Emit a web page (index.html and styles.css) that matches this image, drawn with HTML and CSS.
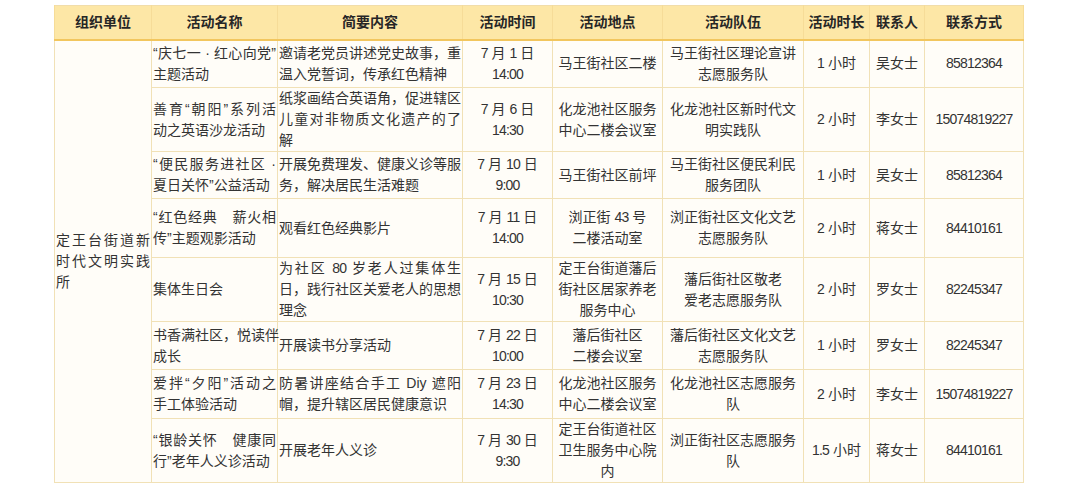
FILE: index.html
```html
<!DOCTYPE html>
<html lang="zh-CN">
<head>
<meta charset="utf-8">
<title>活动表</title>
<link rel="stylesheet" href="styles.css">
</head>
<body>
<div class="page">
<table class="tbl">
  <colgroup>
    <col class="c1"><col class="c2"><col class="c3"><col class="c4"><col class="c5"><col class="c6"><col class="c7"><col class="c8"><col class="c9">
  </colgroup>
  <thead>
    <tr class="hd">
      <th>组织单位</th><th>活动名称</th><th>简要内容</th><th>活动时间</th><th>活动地点</th><th>活动队伍</th><th>活动时长</th><th>联系人</th><th>联系方式</th>
    </tr>
  </thead>
  <tbody>
    <tr class="r1">
      <td class="lt org" rowspan="8"><span class="l">定王台街道新</span><span class="l">时代文明实践</span><span class="l">所</span></td>
      <td class="lt"><span class="l">“庆七一 · 红心向党”</span><span class="l">主题活动</span></td>
      <td class="lt"><span class="l">邀请老党员讲述党史故事，重</span><span class="l">温入党誓词，传承红色精神</span></td>
      <td><span class="n">7</span> 月 <span class="n">1</span> 日<br><span class="n">14:00</span></td>
      <td>马王街社区二楼</td>
      <td>马王街社区理论宣讲<br>志愿服务队</td>
      <td><span class="n">1</span> 小时</td>
      <td>吴女士</td>
      <td class="n">85812364</td>
    </tr>
    <tr class="r2">
      <td class="lt"><span class="l">善育“朝阳”系列活</span><span class="l">动之英语沙龙活动</span></td>
      <td class="lt"><span class="l">纸浆画结合英语角，促进辖区</span><span class="l">儿童对非物质文化遗产的了</span><span class="l">解</span></td>
      <td><span class="n">7</span> 月 <span class="n">6</span> 日<br><span class="n">14:30</span></td>
      <td>化龙池社区服务<br>中心二楼会议室</td>
      <td>化龙池社区新时代文<br>明实践队</td>
      <td><span class="n">2</span> 小时</td>
      <td>李女士</td>
      <td class="n">15074819227</td>
    </tr>
    <tr class="r3">
      <td class="lt"><span class="l">“便民服务进社区 ·</span><span class="l">夏日关怀”公益活动</span></td>
      <td class="lt"><span class="l">开展免费理发、健康义诊等服</span><span class="l">务，解决居民生活难题</span></td>
      <td><span class="n">7</span> 月 <span class="n">10</span> 日<br><span class="n">9:00</span></td>
      <td>马王街社区前坪</td>
      <td>马王街社区便民利民<br>服务团队</td>
      <td><span class="n">1</span> 小时</td>
      <td>吴女士</td>
      <td class="n">85812364</td>
    </tr>
    <tr class="r4">
      <td class="lt"><span class="l">“红色经典　薪火相</span><span class="l">传”主题观影活动</span></td>
      <td class="lt"><span class="l">观看红色经典影片</span></td>
      <td><span class="n">7</span> 月 <span class="n">11</span> 日<br><span class="n">14:00</span></td>
      <td>浏正街 <span class="n">43</span> 号<br>二楼活动室</td>
      <td>浏正街社区文化文艺<br>志愿服务队</td>
      <td><span class="n">2</span> 小时</td>
      <td>蒋女士</td>
      <td class="n">84410161</td>
    </tr>
    <tr class="r5">
      <td class="lt"><span class="l">集体生日会</span></td>
      <td class="lt"><span class="l">为社区 <span class="n">80</span> 岁老人过集体生</span><span class="l">日，践行社区关爱老人的思想</span><span class="l">理念</span></td>
      <td><span class="n">7</span> 月 <span class="n">15</span> 日<br><span class="n">10:30</span></td>
      <td>定王台街道藩后<br>街社区居家养老<br>服务中心</td>
      <td>藩后街社区敬老<br>爱老志愿服务队</td>
      <td><span class="n">2</span> 小时</td>
      <td>罗女士</td>
      <td class="n">82245347</td>
    </tr>
    <tr class="r6">
      <td class="lt"><span class="l">书香满社区，悦读伴</span><span class="l">成长</span></td>
      <td class="lt"><span class="l">开展读书分享活动</span></td>
      <td><span class="n">7</span> 月 <span class="n">22</span> 日<br><span class="n">10:00</span></td>
      <td>藩后街社区<br>二楼会议室</td>
      <td>藩后街社区文化文艺<br>志愿服务队</td>
      <td><span class="n">1</span> 小时</td>
      <td>罗女士</td>
      <td class="n">82245347</td>
    </tr>
    <tr class="r7">
      <td class="lt"><span class="l">爱拌“夕阳”活动之</span><span class="l">手工体验活动</span></td>
      <td class="lt"><span class="l">防暑讲座结合手工 Diy 遮阳</span><span class="l">帽，提升辖区居民健康意识</span></td>
      <td><span class="n">7</span> 月 <span class="n">23</span> 日<br><span class="n">14:30</span></td>
      <td>化龙池社区服务<br>中心二楼会议室</td>
      <td>化龙池社区志愿服务<br>队</td>
      <td><span class="n">2</span> 小时</td>
      <td>李女士</td>
      <td class="n">15074819227</td>
    </tr>
    <tr class="r8">
      <td class="lt"><span class="l">“银龄关怀　健康同</span><span class="l">行”老年人义诊活动</span></td>
      <td class="lt"><span class="l">开展老年人义诊</span></td>
      <td><span class="n">7</span> 月 <span class="n">30</span> 日<br><span class="n">9:30</span></td>
      <td>定王台街道社区<br>卫生服务中心院<br>内</td>
      <td>浏正街社区志愿服务<br>队</td>
      <td><span class="n">1.5</span> 小时</td>
      <td>蒋女士</td>
      <td class="n">84410161</td>
    </tr>
  </tbody>
</table>
</div>
</body>
</html>
```

FILE: styles.css
```css
html, body {
  margin: 0;
  padding: 0;
  background: #ffffff;
}

.page {
  padding: 5px 0 0 54px;
}

.tbl {
  width: 969px;
  table-layout: fixed;
  border-collapse: collapse;
  font-family: "Liberation Sans", "Noto Sans CJK SC", sans-serif;
  font-size: 14px;
  line-height: 21px;
  color: #333333;
  border: 1px solid #f1ddaa;
}

.c1 { width: 97px; }
.c2 { width: 126px; }
.c3 { width: 185px; }
.c4 { width: 90px; }
.c5 { width: 110px; }
.c6 { width: 141px; }
.c7 { width: 66px; }
.c8 { width: 55px; }
.c9 { width: 99px; }

.hd {
  height: 34px;
  background: #fde7a6;
}

.hd th {
  font-weight: bold;
  color: #262626;
  text-align: center;
  vertical-align: middle;
  padding: 0;
  border-left: 1px solid #f6dc98;
  border-right: 1px solid #f6dc98;
  border-bottom: 2px solid #f2c65e;
  white-space: nowrap;
}

.tbl td {
  padding: 0 1px;
  border: 1px solid #f1e1b6;
  text-align: center;
  vertical-align: middle;
  background: #fffdf8;
  white-space: nowrap;
}

.tbl td.lt {
  text-align: left;
}

.l {
  display: block;
  text-align: justify;
  text-align-last: justify;
}

.l:last-child {
  text-align-last: auto;
}

.org {
  padding: 0;
}

.n {
  letter-spacing: -0.8px;
}

.r1 { height: 48px; }
.r2 { height: 63px; }
.r3 { height: 47px; }
.r4 { height: 59px; }
.r5 { height: 63px; }
.r6 { height: 48px; }
.r7 { height: 49px; }
.r8 { height: 63px; }
```
